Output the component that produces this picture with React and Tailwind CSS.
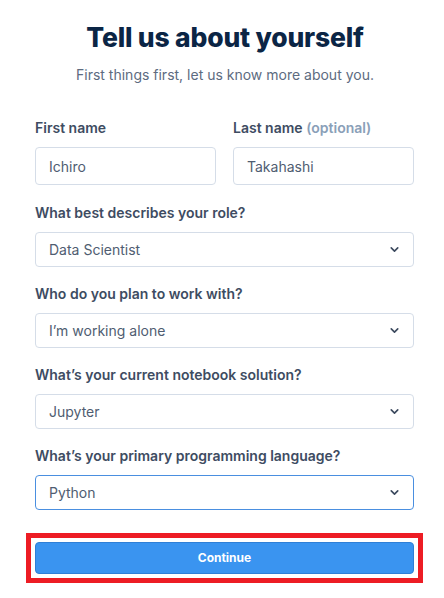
import React from 'react';

const Chevron = () => (
  <svg width="13" height="13" viewBox="0 0 24 24" fill="none" stroke="#3c4a5e" strokeWidth="3" strokeLinecap="round" strokeLinejoin="round">
    <path d="M6 9l6 6 6-6" />
  </svg>
);

const Label = ({ children }) => (
  <div className="h-5 text-[14px] leading-5 font-semibold text-[#3e4c62]">{children}</div>
);

const SelectField = ({ label, value, active }) => (
  <div className="flex flex-col">
    <Label>{label}</Label>
    <div
      className={`mt-[9px] h-[35px] flex items-center justify-between pl-[13px] pr-[12px] rounded-[4px] border bg-white ${
        active ? 'border-[#4a8fe0]' : 'border-[#d5dde8]'
      }`}
    >
      <span className="text-[14px] text-[#4f5d71]">{value}</span>
      <Chevron />
    </div>
  </div>
);

const App = () => {
  return (
    <div className="w-[444px] h-[598px] overflow-hidden bg-white pt-[20px]" style={{ fontFamily: 'Inter, "Noto Sans", sans-serif' }}>
      <div className="pl-[6px]">
        <h1 className="text-center text-[26.5px] leading-[34px] font-extrabold text-[#0b2545] tracking-[-0.2px]">
          Tell us about yourself
        </h1>
        <p className="mt-[11px] text-center text-[14px] leading-5 text-[#5d6b80]">
          First things first, let us know more about you.
        </p>
      </div>

      <div className="pl-[35px] pr-[30px]">
        <div className="mt-[33px] grid grid-cols-2 gap-x-[17px]">
          <div className="flex flex-col">
            <Label>First name</Label>
            <div className="mt-[9px] h-[38px] flex items-center px-[13px] rounded-[4px] border border-[#d5dde8]">
              <span className="text-[14px] text-[#4f5d71]">Ichiro</span>
            </div>
          </div>
          <div className="flex flex-col">
            <Label>
              Last name <span className="text-[#8aa0b8]">(optional)</span>
            </Label>
            <div className="mt-[9px] h-[38px] flex items-center px-[13px] rounded-[4px] border border-[#d5dde8]">
              <span className="text-[14px] text-[#4f5d71]">Takahashi</span>
            </div>
          </div>
        </div>

        <div className="mt-[18px] flex flex-col gap-[17px]">
          <SelectField label="What best describes your role?" value="Data Scientist" />
          <SelectField label="Who do you plan to work with?" value="I’m working alone" />
          <SelectField label="What’s your current notebook solution?" value="Jupyter" />
          <SelectField label="What’s your primary programming language?" value="Python" active />
        </div>

        <div className="mt-[23px] -mx-[9px] border-[5px] border-[#ed1c24] px-[4px] py-[4px]">
          <button className="w-full h-[32px] rounded-[4px] bg-[#3a94f0] border border-[#2f7fd6] text-white text-[12px] font-bold">
            Continue
          </button>
        </div>
      </div>
    </div>
  );
};

export default App;
